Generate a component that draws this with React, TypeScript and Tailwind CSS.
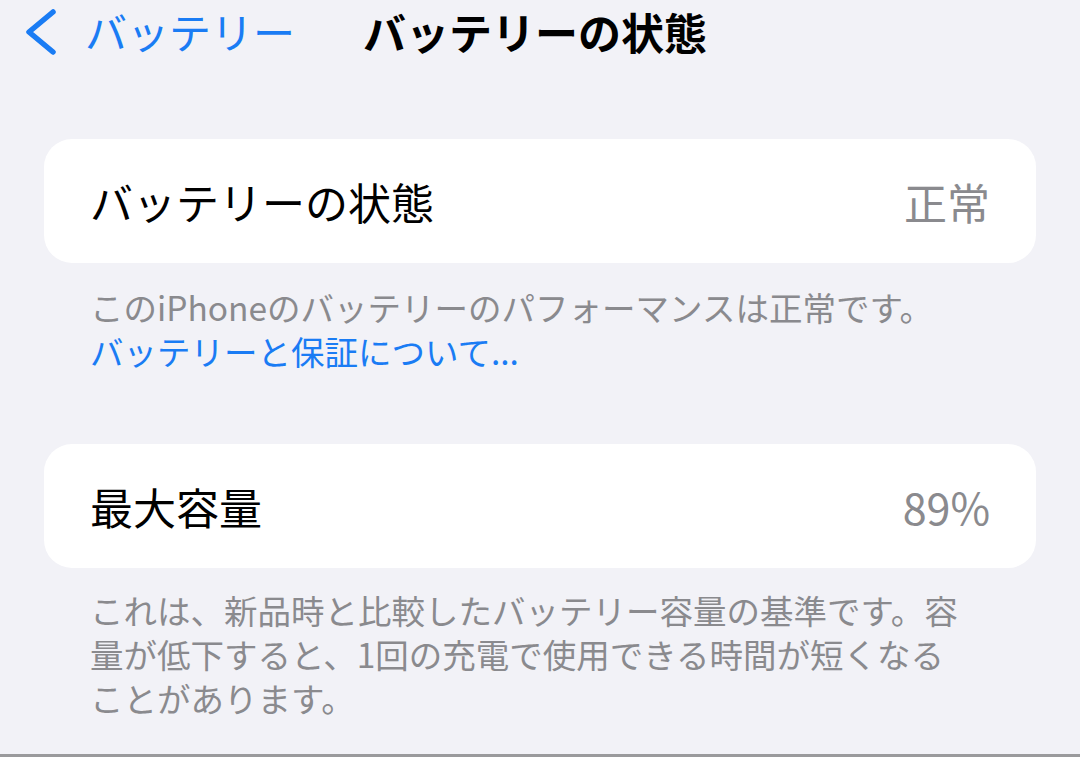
const font = { fontFamily: '"Noto Sans CJK JP", "Noto Sans", sans-serif' };

const Row = ({ label, value }: { label: string; value: string }) => (
  <div className="mx-[44px] h-[124px] rounded-[28px] bg-white flex items-center justify-between pl-[46px] pr-[46px]">
    <span className="text-[43px] leading-none text-black">{label}</span>
    <span className="text-[43px] leading-none text-[#8a8a8e]">{value}</span>
  </div>
);

export default function App() {
  return (
    <div
      className="w-[1080px] h-[757px] overflow-hidden bg-[#f2f2f7] border-b-[3px] border-[#9a9a9c]"
      style={font}
    >
      {/* Nav bar */}
      <div className="h-[62px] flex items-center pl-[23px]">
        <svg width="34" height="48" viewBox="0 0 34 48" className="mt-[2px]">
          <polyline
            points="30,4 6,24 30,44"
            fill="none"
            stroke="#1a7cf4"
            strokeWidth="5.5"
            strokeLinecap="round"
            strokeLinejoin="round"
          />
        </svg>
        <span className="ml-[28px] text-[42px] leading-none text-[#1a7cf4]">バッテリー</span>
        <span className="ml-[68px] text-[43px] leading-none font-bold text-black">バッテリーの状態</span>
      </div>

      <div className="pt-[77px]">
        <Row label="バッテリーの状態" value="正常" />
        <div className="px-[90px] pt-[22px] text-[33.5px] leading-[44px] text-[#8a8a8e]">
          <p>このiPhoneのバッテリーのパフォーマンスは正常です。</p>
          <p className="text-[#1a7cf4]">バッテリーと保証について...</p>
        </div>
      </div>

      <div className="pt-[71px]">
        <Row label="最大容量" value="89%" />
        <p className="px-[90px] pt-[20px] text-[33.5px] leading-[44px] text-[#8a8a8e]">
          これは、新品時と比較したバッテリー容量の基準です。容
          <br />
          量が低下すると、1回の充電で使用できる時間が短くなる
          <br />
          ことがあります。
        </p>
      </div>
    </div>
  );
}
